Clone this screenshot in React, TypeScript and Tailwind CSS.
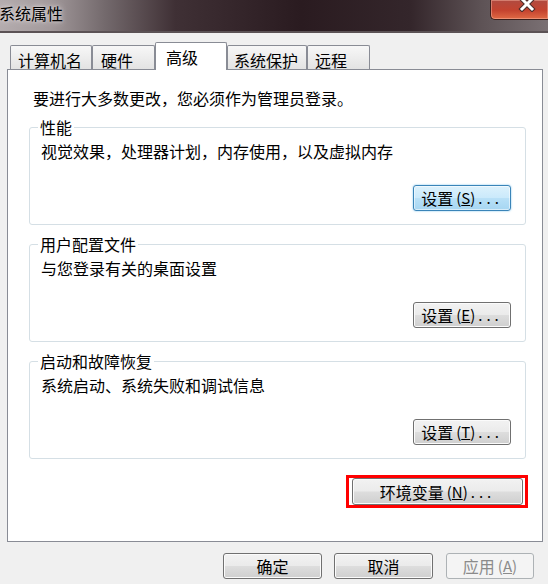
import React from "react";

type Variant = "normal" | "hot" | "disabled";

function WinButton({
  children,
  className = "",
  variant = "normal",
}: {
  children: React.ReactNode;
  className?: string;
  variant?: Variant;
}) {
  const v =
    variant === "hot"
      ? "border-[#3a84b8] bg-[linear-gradient(180deg,#dcf1fc_0%,#cbeafb_48%,#b8e0f7_52%,#a6d6f2_100%)] shadow-[inset_0_0_0_1px_rgba(255,255,255,0.55),0_0_2px_#6fbdea]"
      : variant === "disabled"
      ? "border-[#adb2b5] bg-[#f4f4f4] text-[#8b8b8b]"
      : "border-[#707070] bg-[linear-gradient(180deg,#f2f2f2_0%,#ebebeb_48%,#dddddd_52%,#cfcfcf_100%)] shadow-[inset_0_0_0_1px_#fbfbfb]";
  return (
    <div
      className={`flex items-center justify-center rounded-[3px] border leading-[18px] ${v} ${className}`}
    >
      {children}
    </div>
  );
}

function Accel({ text, k, dots = true }: { text: string; k: string; dots?: boolean }) {
  return (
    <>
      <span>{text}</span>
      <span className="ml-[3px] text-[15px]">
        (<span className="underline underline-offset-[1px]">{k}</span>)
      </span>
      {dots && <span className="ml-[3px] tracking-[4px] text-[15px]">...</span>}
    </>
  );
}

function Group({
  title,
  desc,
  btn,
  first = false,
}: {
  title: string;
  desc: string;
  btn: React.ReactNode;
  first?: boolean;
}) {
  return (
    <fieldset
      className={`${first ? "mt-[11px]" : "mt-[10px]"} ml-[21px] w-[497px] h-[107px] rounded-[3px] border border-[#d5dfe5] px-[8px]`}
    >
      <legend className="px-[2px] leading-[18px]">{title}</legend>
      <div className="flex flex-col">
        <div className="mt-[6px] ml-[3px] leading-[18px]">{desc}</div>
        {btn}
      </div>
    </fieldset>
  );
}

export default function App() {
  return (
    <div className="w-[548px] h-[584px] overflow-hidden bg-[#f0f0f0] flex flex-col font-['Noto_Sans_CJK_SC','Microsoft_YaHei',sans-serif] text-[16px] leading-[18px] text-black">
      {/* Title bar */}
      <div className="h-[33px] shrink-0 flex justify-between border-b-2 border-[#5b5255] bg-[linear-gradient(90deg,#b4acae_0%,#a39a9c_9%,#746a6d_19%,#3f3035_32%,#2a1b20_55%,#34262b_75%,#5e5356_88%,#7a7073_100%)]">
        <span className="ml-[-1px] mt-[4px] h-[18px] [text-shadow:0_0_6px_#e6e1e2,0_0_3px_#ddd6d8]">
          系统属性
        </span>
        <div className="w-[58px] h-[20px] overflow-hidden rounded-bl-[5px] border border-t-0 border-r-0 border-[#3a1f1c] bg-[linear-gradient(180deg,#b04a40_0%,#c4432f_55%,#e06a45_100%)] shadow-[inset_0_0_0_1px_rgba(255,190,170,0.45)]">
          <svg width="18" height="16" viewBox="0 0 18 16" className="ml-[27px] -mt-[4px]">
            <path d="M4 3 L14 13 M14 3 L4 13" stroke="#4a2c2a" strokeWidth="5" strokeLinecap="square" />
            <path d="M4 3 L14 13 M14 3 L4 13" stroke="#ffffff" strokeWidth="3" strokeLinecap="square" />
          </svg>
        </div>
      </div>

      {/* Tabs */}
      <div className="relative z-10 flex items-end h-[27px] mt-[9px] pl-[10px] shrink-0">
        <div className="w-[82px] h-[24px] border border-b-0 border-[#898c95] rounded-t-[2px] bg-[linear-gradient(180deg,#f7f7f7,#e3e3e3)] pl-[7px] pt-[5px]">
          计算机名
        </div>
        <div className="w-[63px] h-[24px] border border-b-0 border-[#898c95] rounded-t-[2px] bg-[linear-gradient(180deg,#f7f7f7,#e3e3e3)] pl-[8px] pt-[5px]">
          硬件
        </div>
        <div className="w-[72px] h-[28px] -mb-[1px] border border-b-0 border-[#898c95] rounded-t-[2px] bg-white pl-[10px] pt-[5px]">
          高级
        </div>
        <div className="w-[80px] h-[24px] border border-b-0 border-[#898c95] rounded-t-[2px] bg-[linear-gradient(180deg,#f7f7f7,#e3e3e3)] pl-[6px] pt-[5px]">
          系统保护
        </div>
        <div className="w-[63px] h-[24px] border border-b-0 border-[#898c95] rounded-t-[2px] bg-[linear-gradient(180deg,#f7f7f7,#e3e3e3)] pl-[7px] pt-[5px]">
          远程
        </div>
      </div>

      {/* Panel */}
      <div className="ml-[7px] w-[536px] h-[473px] shrink-0 border border-[#898c95] bg-white flex flex-col pt-[19px]">
        <div className="ml-[25px]">要进行大多数更改，您必须作为管理员登录。</div>

        <Group
          first
          title="性能"
          desc="视觉效果，处理器计划，内存使用，以及虚拟内存"
          btn={
            <WinButton variant="hot" className="self-end mt-[25px] mr-[6px] w-[98px] h-[26px]">
              <Accel text="设置" k="S" />
            </WinButton>
          }
        />
        <Group
          title="用户配置文件"
          desc="与您登录有关的桌面设置"
          btn={
            <WinButton className="self-end mt-[25px] mr-[6px] w-[98px] h-[26px]">
              <Accel text="设置" k="E" />
            </WinButton>
          }
        />
        <Group
          title="启动和故障恢复"
          desc="系统启动、系统失败和调试信息"
          btn={
            <WinButton className="self-end mt-[25px] mr-[6px] w-[98px] h-[26px]">
              <Accel text="设置" k="T" />
            </WinButton>
          }
        />

        <div className="self-end mt-[16px] mr-[14px] w-[182px] h-[33px] border-[3px] border-[#ff0000] pl-[3px] pr-[2px]">
          <WinButton className="w-[171px] h-[27px]">
            <Accel text="环境变量" k="N" />
          </WinButton>
        </div>
      </div>

      {/* Bottom buttons */}
      <div className="mt-[11px] flex justify-end pr-[14px]">
        <WinButton className="w-[99px] h-[26px]">确定</WinButton>
        <WinButton className="ml-[12px] w-[99px] h-[26px]">取消</WinButton>
        <WinButton variant="disabled" className="ml-[13px] w-[88px] h-[26px]">
          <Accel text="应用" k="A" dots={false} />
        </WinButton>
      </div>
    </div>
  );
}
